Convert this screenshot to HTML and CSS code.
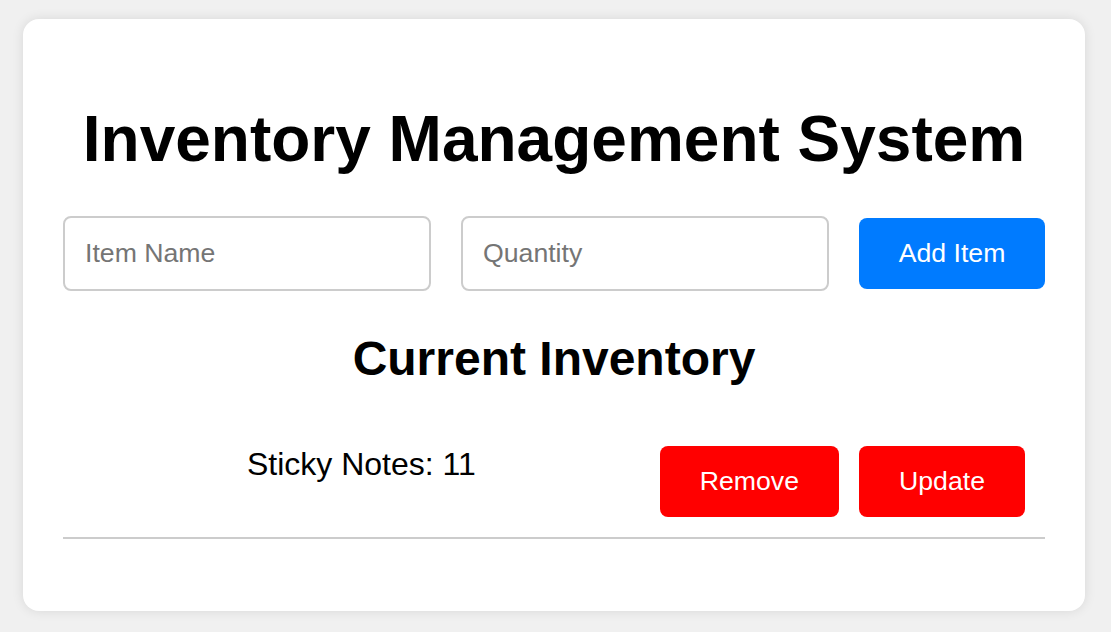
FILE: index.html
```html
<!DOCTYPE html>
<html lang="en">
<head>
<meta charset="utf-8">
<title>Inventory Management System</title>
<link rel="stylesheet" href="styles.css">
</head>
<body>
<div class="card">
  <h1 class="title">Inventory Management System</h1>
  <div class="add-row">
    <input class="field" type="text" placeholder="Item Name">
    <input class="field" type="number" placeholder="Quantity">
    <button class="btn btn-blue">Add Item</button>
  </div>
  <h2 class="subtitle">Current Inventory</h2>
  <ul class="list">
    <li class="item">
      <span class="item-text">Sticky Notes: 11</span>
      <button class="btn btn-red">Remove</button>
      <button class="btn btn-red">Update</button>
    </li>
  </ul>
</div>
</body>
</html>
```

FILE: styles.css
```css
html, body {
  margin: 0;
}
body {
  background: #f0f0f0;
  font-family: "Liberation Sans", Arial, sans-serif;
  font-size: 32px;
  padding: 19px 26px 21px 23px;
}
.card {
  background: #fff;
  border-radius: 16px;
  box-shadow: 0 0 12px rgba(0, 0, 0, 0.1);
  padding: 40px;
  width: 982px;
}
.title {
  font-size: 64px;
  font-weight: bold;
  text-align: center;
  margin: 43px 0 40px;
}
.add-row {
  display: flex;
  align-items: center;
  gap: 30px;
}
.field {
  flex: 1;
  min-width: 0;
  font-family: "Liberation Sans", Arial, sans-serif;
  font-size: 26.67px;
  padding: 20px;
  border: 2px solid #ccc;
  border-radius: 8px;
  outline: none;
  -moz-appearance: textfield;
}
.field::placeholder {
  color: #757575;
}
.field::-webkit-outer-spin-button,
.field::-webkit-inner-spin-button {
  -webkit-appearance: none;
  margin: 0;
}
.btn {
  font-family: "Liberation Sans", Arial, sans-serif;
  font-size: 26.67px;
  padding: 20px 40px;
  border: none;
  border-radius: 8px;
  color: #fff;
  cursor: pointer;
}
.btn-blue {
  background: #007bff;
  flex: 0 0 186px;
  padding: 20px 0;
}
.btn-red {
  background: #ff0000;
  margin-right: 20px;
}
.subtitle {
  font-size: 48px;
  font-weight: bold;
  text-align: center;
  margin: 40px 0;
}
.list {
  list-style: none;
  margin: 32px 0;
  padding: 0;
}
.item {
  display: flex;
  align-items: flex-start;
  padding: 20px 0;
  border-bottom: 2px solid #ccc;
}
.item-text {
  flex: 1;
  text-align: center;
}
```
